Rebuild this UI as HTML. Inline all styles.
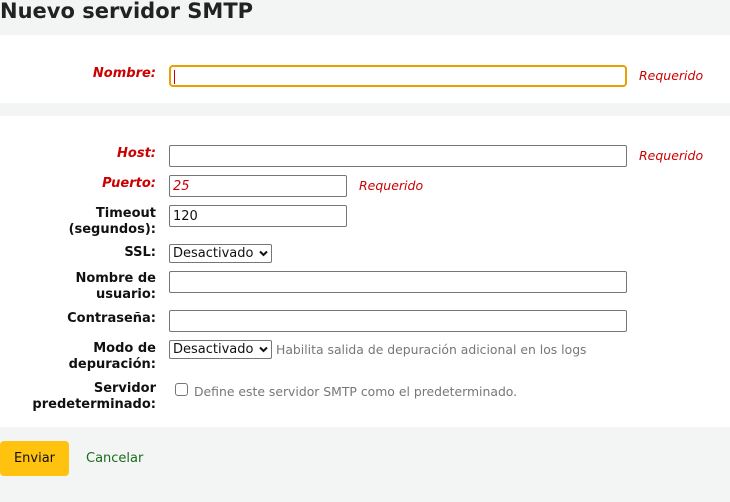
<!DOCTYPE html>
<html><head><meta charset="utf-8"><style>
*{box-sizing:border-box;margin:0;padding:0}
body{width:730px;height:502px;background:#f3f4f4;font-family:"DejaVu Sans","Liberation Sans",sans-serif;font-size:13px;color:#111;position:relative;overflow:hidden}
.a{position:absolute}
h1{position:absolute;left:0;top:-1px;font-size:21px;font-weight:bold;color:#222}
.panel{position:absolute;left:0;width:730px;background:#fff}
.lbl{position:absolute;right:574px;text-align:right;font-weight:bold;line-height:16px;color:#111}
.req{color:#c00;font-style:italic}
.in{position:absolute;left:169px;height:22px;border:1px solid #767676;border-radius:2px;background:#fff;padding:0 3px;line-height:20px}
.rq{position:absolute;color:#c00;font-style:italic;font-size:12.5px}
.sel{position:absolute;left:169px;height:19px;border:1px solid #767676;border-radius:2px;background:#fff;padding:0 3px;line-height:17px;font-size:13px;width:103px;white-space:nowrap}
.sel svg{position:absolute;right:3px;top:5px}
.hint{position:absolute;color:#777;font-size:12.4px}
</style></head><body>
<h1>Nuevo servidor SMTP</h1>
<div class="panel" style="top:35px;height:68px"></div>
<div class="panel" style="top:116px;height:311px"></div>

<div class="lbl req" style="top:66px">Nombre:</div>
<div class="in" style="top:65px;width:458px;border:2px solid #e8a100;border-radius:4px"><span style="display:inline-block;width:1px;height:14px;background:#c00;margin-top:3px"></span></div>
<div class="rq" style="left:639px;top:68px">Requerido</div>

<div class="lbl req" style="top:146px">Host:</div>
<div class="in" style="top:145px;width:458px"></div>
<div class="rq" style="left:639px;top:148px">Requerido</div>

<div class="lbl req" style="top:176px">Puerto:</div>
<div class="in" style="top:175px;width:178px;color:#c00;font-style:italic;padding-top:1px">25</div>
<div class="rq" style="left:359px;top:178px">Requerido</div>

<div class="lbl" style="top:206px">Timeout<br>(segundos):</div>
<div class="in" style="top:205px;width:178px;padding-top:1px">120</div>

<div class="lbl" style="top:245px">SSL:</div>
<div class="sel" style="top:244px">Desactivado<svg width="9" height="7" viewBox="0 0 9 7"><path d="M1 1.5L4.5 5L8 1.5" fill="none" stroke="#111" stroke-width="2"/></svg></div>

<div class="lbl" style="top:271px">Nombre de<br>usuario:</div>
<div class="in" style="top:271px;width:458px"></div>

<div class="lbl" style="top:311px">Contraseña:</div>
<div class="in" style="top:310px;width:458px"></div>

<div class="lbl" style="top:341px">Modo de<br>depuración:</div>
<div class="sel" style="top:340px">Desactivado<svg width="9" height="7" viewBox="0 0 9 7"><path d="M1 1.5L4.5 5L8 1.5" fill="none" stroke="#111" stroke-width="2"/></svg></div>
<div class="hint" style="left:276px;top:342px">Habilita salida de depuración adicional en los logs</div>

<div class="lbl" style="top:381px">Servidor<br>predeterminado:</div>
<div class="a" style="left:175px;top:383px;width:13px;height:13px;border:1px solid #767676;border-radius:3px;background:#fff"></div>
<div class="hint" style="left:194px;top:384px">Define este servidor SMTP como el predeterminado.</div>

<div class="a" style="left:0;top:441px;width:69px;height:35px;background:#ffc20e;border-radius:4px;text-align:center;line-height:36px;color:#111">Enviar</div>
<div class="a" style="left:86px;top:451px;color:#1a6d1a">Cancelar</div>
</body></html>
